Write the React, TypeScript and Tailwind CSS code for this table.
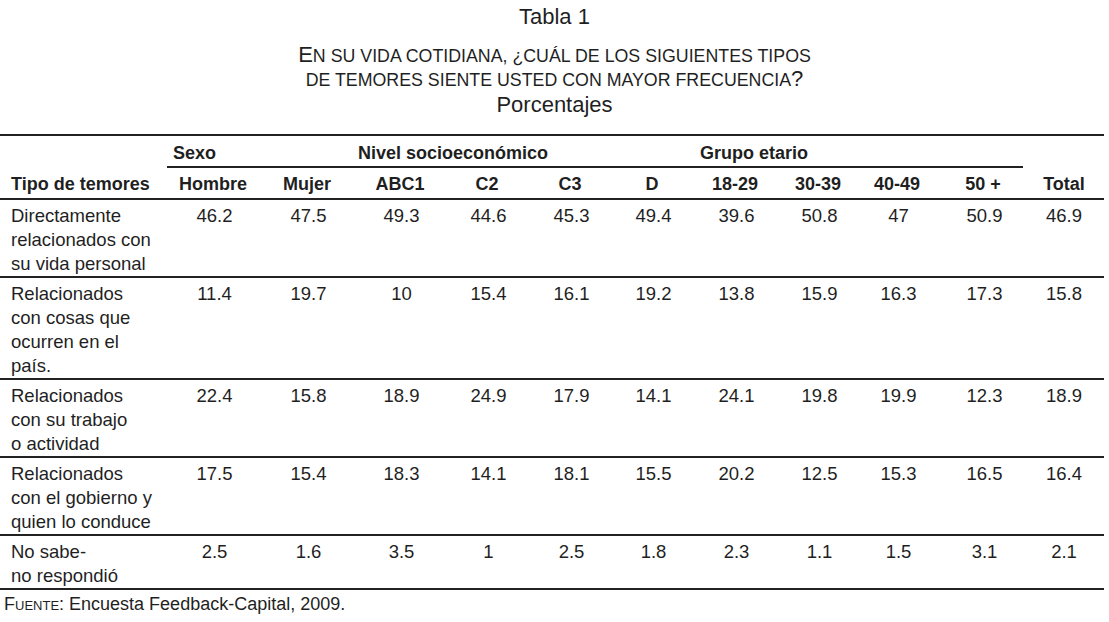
const cols = "grid grid-cols-[165px_96px_92px_94px_80px_86px_78px_88px_78px_80px_92px_75px]"

const headers = ["Hombre", "Mujer", "ABC1", "C2", "C3", "D", "18-29", "30-39", "40-49", "50 +"]

const rows: { label: string[]; values: string[] }[] = [
  {
    label: ["Directamente", "relacionados con", "su vida personal"],
    values: ["46.2", "47.5", "49.3", "44.6", "45.3", "49.4", "39.6", "50.8", "47", "50.9", "46.9"],
  },
  {
    label: ["Relacionados", "con cosas que", "ocurren en el", "país."],
    values: ["11.4", "19.7", "10", "15.4", "16.1", "19.2", "13.8", "15.9", "16.3", "17.3", "15.8"],
  },
  {
    label: ["Relacionados", "con su trabajo", "o actividad"],
    values: ["22.4", "15.8", "18.9", "24.9", "17.9", "14.1", "24.1", "19.8", "19.9", "12.3", "18.9"],
  },
  {
    label: ["Relacionados", "con el gobierno y", "quien lo conduce"],
    values: ["17.5", "15.4", "18.3", "14.1", "18.1", "15.5", "20.2", "12.5", "15.3", "16.5", "16.4"],
  },
  {
    label: ["No sabe-", "no respondió"],
    values: ["2.5", "1.6", "3.5", "1", "2.5", "1.8", "2.3", "1.1", "1.5", "3.1", "2.1"],
  },
]

export default function App() {
  return (
    <div className="w-[1109px] h-[622px] bg-white text-[#1f1f1f] font-['Liberation_Sans',Arial,sans-serif] overflow-hidden">
      {/* Title */}
      <div className="pt-[4px] text-center">
        <p className="text-[22px] leading-[26px]">Tabla 1</p>
        <p className="mt-[14px] text-[17.8px] leading-[24px] uppercase">
          <span className="text-[22px] leading-none">E</span>n su vida cotidiana, ¿cuál de los siguientes tipos
          <br />
          de temores siente usted con mayor frecuencia<span className="text-[22px] leading-none">?</span>
        </p>
        <p className="mt-[1px] text-[22px] leading-[24px]">Porcentajes</p>
      </div>

      {/* Table */}
      <div className="mt-[17px] w-[1104px] border-t-2 border-[#222]">
        {/* group header */}
        <div className={`${cols} text-[18px] leading-[23px] font-bold`}>
          <div />
          <div className="col-span-2 ml-[2px] pl-[6px] pt-[6px] pb-[1px] border-b-2 border-[#222]">Sexo</div>
          <div className="col-span-4 pl-[5px] pt-[6px] pb-[1px] border-b-2 border-[#222]">Nivel socioeconómico</div>
          <div className="col-span-4 mr-[6px] pl-[9px] pt-[6px] pb-[1px] border-b-2 border-[#222]">Grupo etario</div>
          <div />
        </div>

        {/* column header */}
        <div className={`${cols} text-[18px] leading-[23px] font-bold pt-[5px] pb-[2px] border-b-2 border-[#222]`}>
          <div className="pl-[11px]">Tipo de temores</div>
          {headers.map((h) => (
            <div key={h} className="text-center">
              {h}
            </div>
          ))}
          <div className="text-center pr-[5px]">Total</div>
        </div>

        {/* body */}
        {rows.map((row, i) => (
          <div
            key={i}
            className={`${cols} text-[18.5px] leading-[24px] pt-[4px] border-b-2 border-[#222]`}
          >
            <div className="pl-[11px]">
              {row.label.map((l, j) => (
                <div key={j}>{l}</div>
              ))}
            </div>
            {row.values.map((v, j) => (
              <div key={j} className={`text-center ${j === 10 ? "pr-[5px]" : "pl-[3px]"}`}>
                {v}
              </div>
            ))}
          </div>
        ))}
      </div>

      <p className="mt-[2px] pl-[4px] text-[18px] leading-[24px]">
        <span className="[font-variant:small-caps]">Fuente</span>: Encuesta Feedback-Capital, 2009.
      </p>
    </div>
  )
}
